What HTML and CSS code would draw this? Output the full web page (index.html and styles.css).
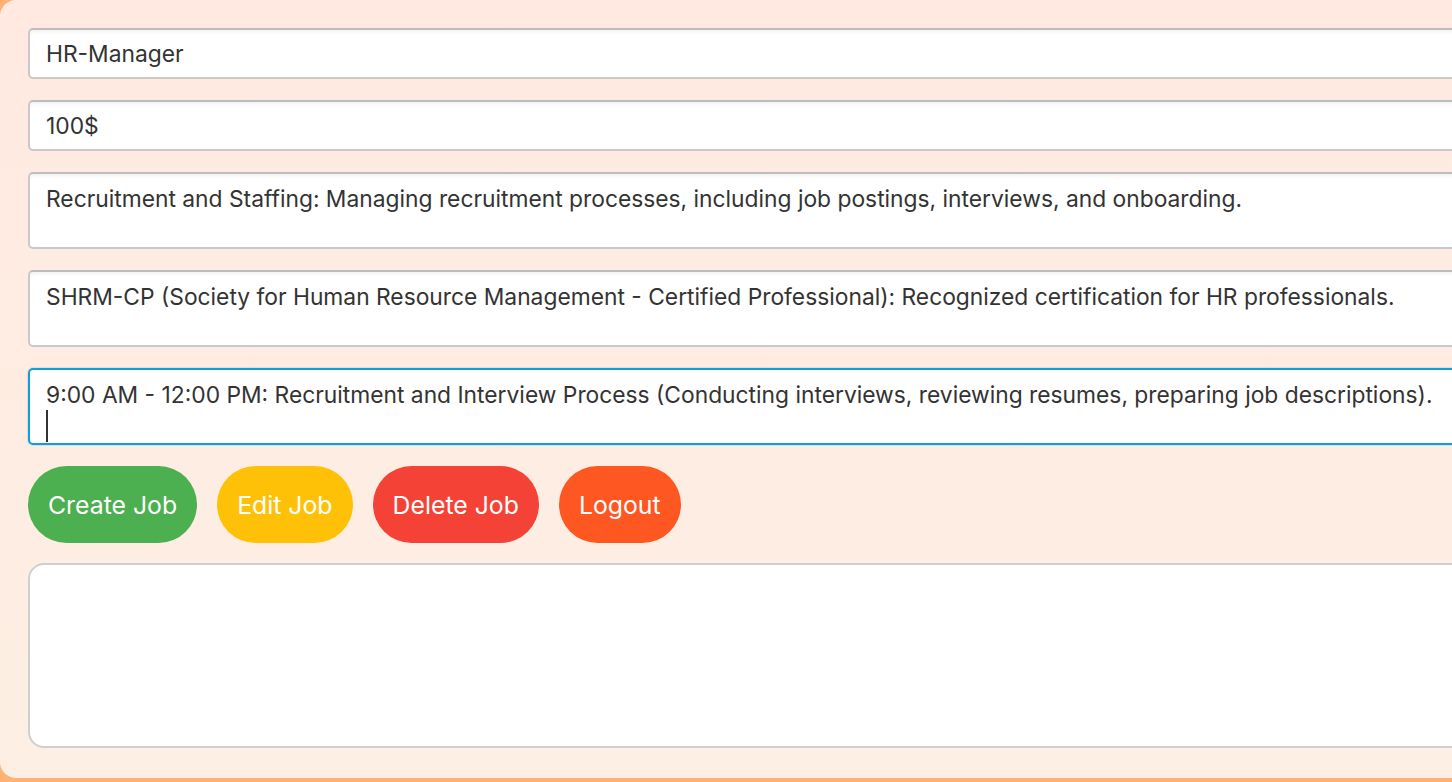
FILE: index.html
```html
<!DOCTYPE html>
<html>
<head>
<meta charset="utf-8">
<link rel="stylesheet" href="styles.css">
</head>
<body>
<div class="panel">
  <div class="field single">HR-Manager</div>
  <div class="field single">100$</div>
  <div class="field multi">Recruitment and Staffing: Managing recruitment processes, including job postings, interviews, and onboarding.</div>
  <div class="field multi">SHRM-CP (Society for Human Resource Management - Certified Professional): Recognized certification for HR professionals.</div>
  <div class="field multi focused">9:00 AM - 12:00 PM: Recruitment and Interview Process (Conducting interviews, reviewing resumes, preparing job descriptions).<span class="caret"></span></div>
  <div class="buttons">
    <button class="btn green">Create Job</button>
    <button class="btn amber">Edit Job</button>
    <button class="btn red">Delete Job</button>
    <button class="btn orange">Logout</button>
  </div>
  <div class="output"></div>
</div>
</body>
</html>
```
FILE: styles.css
```css
html, body {
  margin: 0;
  padding: 0;
  width: 1452px;
  height: 782px;
  overflow: hidden;
  background: #ffb176;
  font-family: Inter, "Noto Sans", sans-serif;
}
.panel {
  width: 1600px;
  height: 778px;
  box-sizing: border-box;
  border-radius: 16px 0 0 16px;
  background: linear-gradient(to bottom, #ffe9e0, #fdefe3);
  padding: 28px 0 0 28px;
  display: flex;
  flex-direction: column;
  gap: 21px;
}
.field {
  width: 1500px;
  box-sizing: border-box;
  background: #fff;
  border: 2px solid #c9c9c9;
  border-top-color: #bdbdbd;
  border-radius: 5px;
  box-shadow: inset 0 4px 4px -2px rgba(0,0,0,0.06);
  color: #333;
  font-size: 22.8px;
  padding: 0 16px;
  white-space: nowrap;
}
.single {
  height: 51px;
  line-height: 47px;
}
.multi {
  height: 77px;
  line-height: 30px;
  padding-top: 10px;
}
.focused {
  border-color: #0ea1d9;
  box-shadow: 0 0 0 1px rgba(14,161,217,0.15);
}
.caret {
  display: block;
  width: 2px;
  height: 32px;
  background: #333;
  margin-top: 0;
}
.buttons {
  display: flex;
  gap: 20px;
  margin-bottom: -1px;
}
.btn {
  border: none;
  height: 77px;
  border-radius: 39px;
  padding: 0 20px;
  color: #fff;
  font-family: Inter, "Noto Sans", sans-serif;
  font-size: 24.8px;
}
.green { background: #4caf50; }
.amber { background: #ffc107; }
.red { background: #f44336; }
.orange { background: #ff5722; }
.output {
  width: 1500px;
  height: 185px;
  box-sizing: border-box;
  background: #fff;
  border: 2px solid #cfcfcf;
  border-radius: 16px;
}
```
